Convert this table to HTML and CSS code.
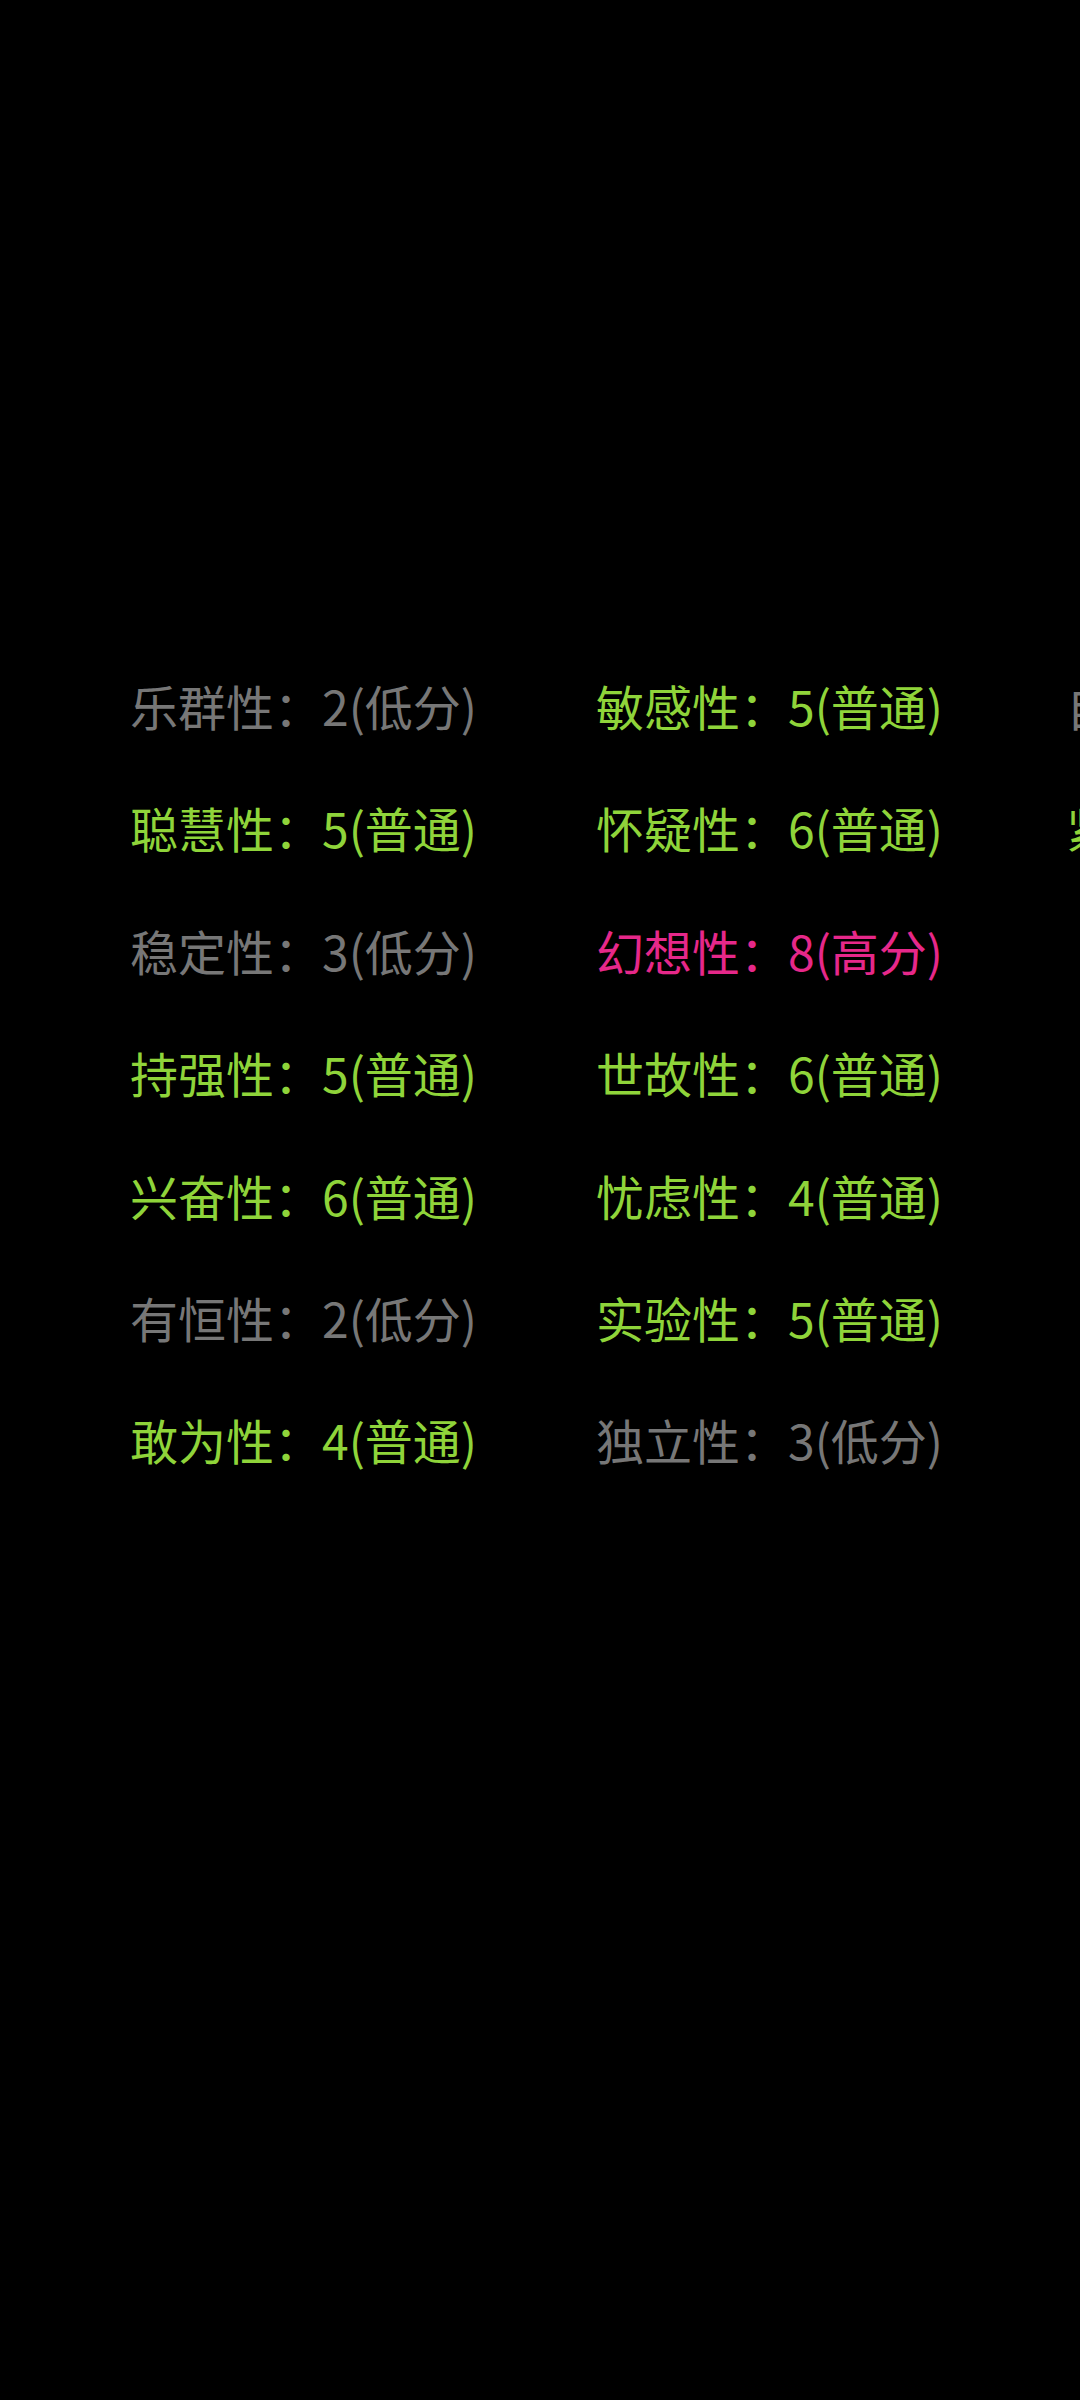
FILE: index.html
```html
<!DOCTYPE html>
<html lang="zh-CN">
<head>
<meta charset="utf-8">
<link rel="stylesheet" href="styles.css">
</head>
<body>
<div class="grid">
  <div class="item low">乐群性：2(低分)</div>
  <div class="item mid">聪慧性：5(普通)</div>
  <div class="item low">稳定性：3(低分)</div>
  <div class="item mid">持强性：5(普通)</div>
  <div class="item mid">兴奋性：6(普通)</div>
  <div class="item low">有恒性：2(低分)</div>
  <div class="item mid">敢为性：4(普通)</div>
  <div class="item mid">敏感性：5(普通)</div>
  <div class="item mid">怀疑性：6(普通)</div>
  <div class="item high">幻想性：8(高分)</div>
  <div class="item mid">世故性：6(普通)</div>
  <div class="item mid">忧虑性：4(普通)</div>
  <div class="item mid">实验性：5(普通)</div>
  <div class="item low">独立性：3(低分)</div>
  <div class="item low">自律性：3(低分)</div>
  <div class="item mid">紧张性：5(普通)</div>
</div>
</body>
</html>
```
FILE: styles.css
```css
html, body {
  margin: 0;
  padding: 0;
  background: #000;
  width: 1080px;
  height: 2400px;
  overflow: hidden;
}
.grid {
  display: grid;
  grid-template-columns: 466px 470px 400px;
  grid-template-rows: repeat(7, 122.4px);
  grid-auto-flow: column;
  padding-top: 644px;
  padding-left: 130px;
  font-family: "Noto Sans CJK SC", "Noto Sans", sans-serif;
  font-size: 48px;
  line-height: 122.4px;
  white-space: nowrap;
}
.low { color: #777777; }
.mid { color: #8fd43a; }
.high { color: #e6288a; }
```
